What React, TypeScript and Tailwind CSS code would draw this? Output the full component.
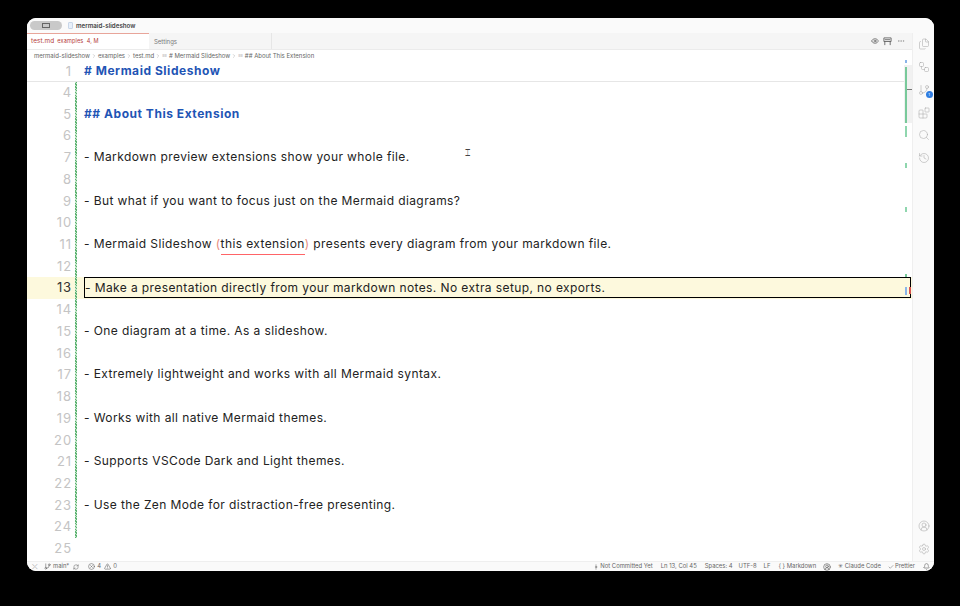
import React from "react";
import { Eye, MoreHorizontal, Files, Search, History, Settings, CircleUserRound, Blocks, Workflow, GitBranch, RefreshCw, XCircle, TriangleAlert, Bell, Check, GitCommitVertical, ChevronRight } from "lucide-react";

const FONT = "[font-family:Inter,'Noto_Sans',sans-serif]";

type Line = { n: number; t?: string; h?: boolean };
const lines: Line[] = [
  { n: 4 },
  { n: 5, t: "## About This Extension", h: true },
  { n: 6 },
  { n: 7, t: "- Markdown preview extensions show your whole file." },
  { n: 8 },
  { n: 9, t: "- But what if you want to focus just on the Mermaid diagrams?" },
  { n: 10 },
  { n: 11 },
  { n: 12 },
  { n: 13, t: "- Make a presentation directly from your markdown notes. No extra setup, no exports." },
  { n: 14 },
  { n: 15, t: "- One diagram at a time. As a slideshow." },
  { n: 16 },
  { n: 17, t: "- Extremely lightweight and works with all Mermaid syntax." },
  { n: 18 },
  { n: 19, t: "- Works with all native Mermaid themes." },
  { n: 20 },
  { n: 21, t: "- Supports VSCode Dark and Light themes." },
  { n: 22 },
  { n: 23, t: "- Use the Zen Mode for distraction-free presenting." },
  { n: 24 },
  { n: 25 },
];

function Row({ l }: { l: Line }) {
  const cur = l.n === 13;
  return (
    <div className={`flex h-[21.72px] shrink-0 ${cur ? "bg-[#fdf9dd]" : ""}`}>
      <div className={`w-[45px] shrink-0 text-right text-[13px] leading-[21.72px] tracking-[0.9px] ${cur ? "text-[#333333]" : "text-[#c4c4c4]"}`}>{l.n}</div>
      <div className={`ml-[3px] w-[2px] shrink-0 ${l.n <= 24 ? "bg-[repeating-linear-gradient(45deg,#5cb270_0,#5cb270_1px,#c4e6cb_1px,#c4e6cb_2px)]" : ""}`} />
      <div className={`ml-[7px] min-w-0 flex-1 whitespace-pre ${cur ? "mr-[1px] h-[21px] overflow-hidden border border-black bg-[#fdf9dd] leading-[19px]" : l.h ? "leading-[20px]" : "leading-[20.5px]"} ${l.h ? "text-[12px] font-bold tracking-[0.54px] text-[#1f55b5]" : "text-[12px] tracking-[0.4px] text-[#222222]"}`}>
        {l.n === 11 ? (
          <span>
            - Mermaid Slideshow <span className="text-[#e88b7d]">(</span>
            <span className="border-b border-red-400 pb-[3px]">this extension</span>
            <span className="text-[#e88b7d]">)</span> presents every diagram from your markdown file.
          </span>
        ) : (
          l.t
        )}
      </div>
    </div>
  );
}

function Tick({ className }: { className: string }) {
  return <div className={`absolute w-[2px] ${className}`} />;
}

function Sep() {
  return <ChevronRight size={6} strokeWidth={1.2} className="mx-[1px] shrink-0 text-[#777777]" />;
}

export default function App() {
  return (
    <div className={`flex h-[606px] w-[960px] bg-black pt-[18px] pb-[35px] pl-[27px] pr-[26px] ${FONT}`}>
      <div className="flex min-w-0 flex-1 flex-col overflow-hidden rounded-[9px] bg-white">
        {/* Title bar */}
        <div className="flex h-[15px] shrink-0 items-center bg-[#fafafa] pl-[3px]">
          <div className="flex h-[9px] w-[32px] items-center justify-center rounded-full bg-[#c9c9c9]">
            <div className="h-[5px] w-[8px] border border-[#666666]" />
          </div>
          <div className="ml-[6px] h-[7px] w-[5px] rounded-[1px] border border-[#c8d6e8] bg-[#e8f0fa]" />
          <span className="ml-[3px] text-[6.2px] font-semibold text-[#444444]">mermaid-slideshow</span>
        </div>
        <div className="flex min-h-0 flex-1">
          {/* Main column */}
          <div className="flex min-w-0 flex-1 flex-col">
            {/* Tabs */}
            <div className="flex h-[17px] shrink-0 items-stretch border-b border-[#ebebeb] bg-[#f5f5f5] text-[6px]">
              <div className="flex w-[122px] items-center border-t border-[#e8a59a] bg-white pl-[4px] tracking-[0.1px] whitespace-pre text-[#b5403a]">
                <span className="text-[6.4px]">test.md</span>
                <span className="ml-[3px] text-[5.6px]">examples  4, M</span>
              </div>
              <div className="flex w-[123px] items-center border-r border-[#e6e6e6] pl-[5px] text-[#777777]">Settings</div>
              <div className="flex flex-1 items-center justify-end gap-[4px] pr-[7px] text-[#555555]">
                <Eye size={8} />
                <svg width="9" height="9" viewBox="0 0 10 10" fill="none" stroke="#555555" strokeWidth="0.9"><path d="M1 1h8v4H1zM2 5v4M8 5v4M2 3h6" /></svg>
                <MoreHorizontal size={8} className="ml-[1px] text-[#999999]" />
              </div>
            </div>
            {/* Editor */}
            <div className="relative flex min-h-0 flex-1 flex-col">
              {/* Breadcrumbs */}
              <div className="flex h-[11px] shrink-0 items-center pl-[7px] text-[6px] whitespace-pre text-[#666666]">
                <span>mermaid-slideshow</span>
                <Sep />
                <span>examples</span>
                <Sep />
                <span>test.md</span>
                <Sep />
                <span className="mr-[2px] text-[4px]">≡≡</span>
                <span># Mermaid Slideshow</span>
                <Sep />
                <span className="mr-[2px] text-[4px]">≡≡</span>
                <span>## About This Extension</span>
              </div>
              {/* Sticky heading */}
              <div className="flex h-[21px] shrink-0 border-b border-[#e6e6e6] leading-[20px]">
                <div className="w-[45px] shrink-0 text-right text-[13px] tracking-[0.9px] text-[#c4c4c4]">1</div>
                <div className="ml-[12px] whitespace-pre text-[12px] font-bold tracking-[0.54px] text-[#1f55b5]"># Mermaid Slideshow</div>
              </div>
              {/* Lines */}
              <div className="flex min-h-0 flex-1 flex-col overflow-hidden">
                {lines.map((l) => (
                  <Row key={l.n} l={l} />
                ))}
              </div>
              {/* I-beam cursor */}
              <div className="absolute top-[98px] left-[438px] text-[9px] leading-none text-[#444444]">⌶</div>
              {/* Overview ruler */}
              <div className="absolute top-[15px] right-0 h-[58px] w-[8px] bg-[#f1f1f1]" />
              <div className="absolute top-[39px] right-0 h-[1px] w-[6px] bg-[#777777]" />
              <Tick className="top-[10px] right-[5px] h-[3px] bg-[#8ab4e8]" />
              <Tick className="top-[17px] right-[5px] h-[56px] bg-[#78c99a]" />
              <Tick className="top-[76px] right-[5px] h-[11px] bg-[#8fd6ae]" />
              <Tick className="top-[113px] right-[5px] h-[5px] bg-[#8fd6ae]" />
              <Tick className="top-[157px] right-[5px] h-[5px] bg-[#8fd6ae]" />
              <Tick className="top-[224px] right-[5px] h-[3px] bg-[#78c99a]" />
              <Tick className="top-[237px] right-[5px] h-[8px] bg-[#8ab4e8]" />
              <Tick className="top-[237px] right-[1px] h-[7px] bg-[#d9534f]" />
            </div>
          </div>
          {/* Activity bar */}
          <div className="flex w-[22px] shrink-0 flex-col items-center border-l border-[#efefef] bg-[#fafafa] text-[#a8a8a8]">
            <Files size={12} strokeWidth={1.1} className="mt-[5px]" />
            <Workflow size={12} strokeWidth={1.1} className="mt-[11px]" />
            <div className="relative mt-[11px]">
              <GitBranch size={12} strokeWidth={1.1} />
              <div className="absolute -right-[3px] -bottom-[2px] flex h-[7px] w-[7px] items-center justify-center rounded-full bg-[#2f7de1] text-[4px] text-white">1</div>
            </div>
            <Blocks size={12} strokeWidth={1.1} className="mt-[11px]" />
            <Search size={12} strokeWidth={1.1} className="mt-[10px]" />
            <History size={12} strokeWidth={1.1} className="mt-[11px]" />
            <div className="flex-1" />
            <CircleUserRound size={12} strokeWidth={1.1} />
            <Settings size={12} strokeWidth={1.1} className="mt-[11px] mb-[6px]" />
          </div>
        </div>
        {/* Status bar */}
        <div className="flex h-[10px] shrink-0 items-center border-t border-[#efefef] bg-[#fafafa] pl-[5px] pr-[4px] text-[5.9px] whitespace-pre text-[#666666]">
          <span className="text-[7px] leading-none text-[#888888]">⤫</span>
          <GitBranch size={7} className="ml-[6px]" />
          <span className="ml-[2px]">main*</span>
          <RefreshCw size={6} className="ml-[4px]" />
          <XCircle size={7} className="ml-[9px]" />
          <span className="ml-[2px]">4</span>
          <TriangleAlert size={7} className="ml-[3px]" />
          <span className="ml-[2px]">0</span>
          <div className="flex-1" />
          <GitCommitVertical size={6} />
          <span className="ml-[1px]">Not Committed Yet</span>
          <span className="ml-[8px]">Ln 13, Col 45</span>
          <span className="ml-[8px]">Spaces: 4</span>
          <span className="ml-[6px]">UTF-8</span>
          <span className="ml-[7px]">LF</span>
          <span className="ml-[8px]">{"{ }"} Markdown</span>
          <CircleUserRound size={8} className="ml-[7px]" />
          <span className="ml-[7px]">✳ Claude Code</span>
          <Check size={6} className="ml-[7px]" />
          <span className="ml-[1px]">Prettier</span>
          <Bell size={7} className="ml-[8px]" />
        </div>
      </div>
    </div>
  );
}
